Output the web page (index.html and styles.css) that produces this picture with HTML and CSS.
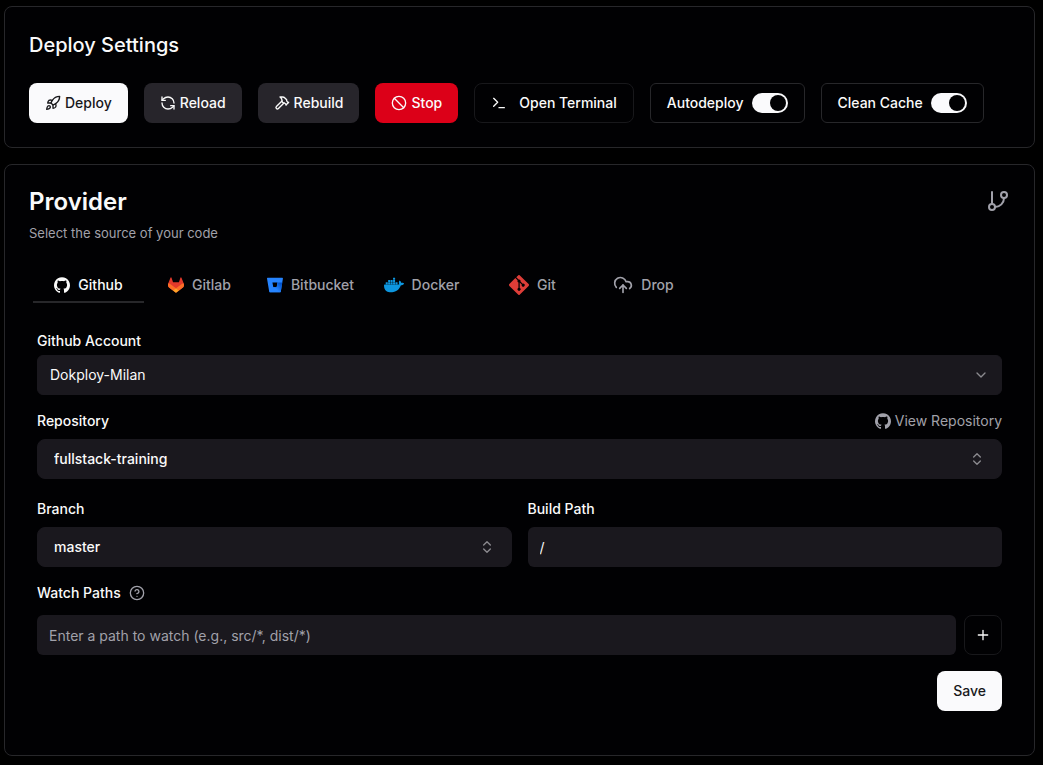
FILE: index.html
```html
<!DOCTYPE html>
<html lang="en">
<head>
<meta charset="utf-8">
<meta name="viewport" content="width=device-width, initial-scale=1">
<title>Deploy Settings</title>
<link rel="stylesheet" href="styles.css">
</head>
<body>
<svg class="sprite" aria-hidden="true">
  <symbol id="github" viewBox="0 0 438.549 438.549"><path fill="currentColor" d="M409.132 114.573c-19.608-33.596-46.205-60.194-79.798-79.8-33.598-19.607-70.277-29.408-110.063-29.408-39.781 0-76.472 9.804-110.063 29.408-33.596 19.605-60.192 46.204-79.8 79.8C9.803 148.168 0 184.854 0 224.63c0 47.78 13.94 90.745 41.827 128.906 27.884 38.164 63.906 64.572 108.063 79.227 5.14.954 8.945.283 11.419-1.996 2.475-2.282 3.711-5.14 3.711-8.562 0-.571-.049-5.708-.144-15.417a2549.81 2549.81 0 01-.144-25.406l-6.567 1.136c-4.187.767-9.469 1.092-15.846 1-6.374-.089-12.991-.757-19.842-1.999-6.854-1.231-13.229-4.086-19.13-8.559-5.898-4.473-10.085-10.328-12.56-17.556l-2.855-6.57c-1.903-4.374-4.899-9.233-8.992-14.559-4.093-5.331-8.232-8.945-12.419-10.848l-1.999-1.431c-1.332-.951-2.568-2.098-3.711-3.429-1.142-1.331-1.997-2.663-2.568-3.997-.572-1.335-.098-2.43 1.427-3.289 1.525-.859 4.281-1.276 8.28-1.276l5.708.853c3.807.763 8.516 3.042 14.133 6.851 5.614 3.806 10.229 8.754 13.846 14.842 4.38 7.806 9.657 13.754 15.846 17.847 6.184 4.093 12.419 6.136 18.699 6.136 6.28 0 11.704-.476 16.274-1.423 4.565-.952 8.848-2.383 12.847-4.285 1.713-12.758 6.377-22.559 13.988-29.41-10.848-1.14-20.601-2.857-29.264-5.14-8.658-2.286-17.605-5.996-26.835-11.14-9.235-5.137-16.896-11.516-22.985-19.126-6.09-7.614-11.088-17.61-14.987-29.979-3.901-12.374-5.852-26.648-5.852-42.826 0-23.035 7.52-42.637 22.557-58.817-7.044-17.318-6.379-36.732 1.997-58.24 5.52-1.715 13.706-.428 24.554 3.853 10.85 4.283 18.794 7.952 23.84 10.994 5.046 3.041 9.089 5.618 12.135 7.708 17.705-4.947 35.976-7.421 54.818-7.421s37.117 2.474 54.823 7.421l10.849-6.849c7.419-4.57 16.18-8.758 26.262-12.565 10.088-3.805 17.802-4.853 23.134-3.138 8.562 21.509 9.325 40.922 2.279 58.24 15.036 16.18 22.559 35.787 22.559 58.817 0 16.178-1.958 30.497-5.853 42.966-3.9 12.471-8.941 22.457-15.125 29.979-6.191 7.521-13.901 13.85-23.131 18.986-9.232 5.14-18.182 8.85-26.84 11.136-8.662 2.286-18.415 4.004-29.263 5.146 9.894 8.562 14.842 22.077 14.842 40.539v60.237c0 3.422 1.19 6.279 3.572 8.562 2.379 2.279 6.136 2.95 11.276 1.995 44.163-14.653 80.185-41.062 108.068-79.226 27.88-38.161 41.825-81.126 41.825-128.906-.01-39.771-9.818-76.454-29.414-110.049z"/></symbol>
  <symbol id="chevrons" viewBox="0 0 24 24"><path d="m7 15 5 5 5-5M7 9l5-5 5 5"/></symbol>
</svg>

<main class="page">
  <section class="card">
    <h2 class="card-title">Deploy Settings</h2>
    <div class="actions">
      <button type="button" class="btn btn-primary">
        <svg class="icon" viewBox="0 0 24 24"><path d="M4.5 16.5c-1.5 1.26-2 5-2 5s3.74-.5 5-2c.71-.84.7-2.13-.09-2.91a2.18 2.18 0 0 0-2.91-.09z"/><path d="m12 15-3-3a22 22 0 0 1 2-3.95A12.88 12.88 0 0 1 22 2c0 2.72-.78 7.5-6 11a22.35 22.35 0 0 1-4 2z"/><path d="M9 12H4s.55-3.03 2-4c1.62-1.08 5 0 5 0"/><path d="M12 15v5s3.03-.55 4-2c1.08-1.62 0-5 0-5"/></svg>
        Deploy
      </button>
      <button type="button" class="btn btn-secondary">
        <svg class="icon" viewBox="0 0 24 24"><path d="M21 12a9 9 0 0 0-9-9 9.75 9.75 0 0 0-6.74 2.74L3 8"/><path d="M3 3v5h5"/><path d="M3 12a9 9 0 0 0 9 9 9.75 9.75 0 0 0 6.74-2.74L21 16"/><path d="M16 16h5v5"/></svg>
        Reload
      </button>
      <button type="button" class="btn btn-secondary">
        <svg class="icon" viewBox="0 0 24 24"><path d="m15 12-8.373 8.373a1 1 0 1 1-3-3L12 9"/><path d="m18 15 4-4"/><path d="m21.5 11.5-1.914-1.914A2 2 0 0 1 19 8.172V7l-2.26-2.26a6 6 0 0 0-4.202-1.756L9 2.96l.92.82A6.18 6.18 0 0 1 12 8.4V10l2 2h1.172a2 2 0 0 1 1.414.586L18.5 14.5"/></svg>
        Rebuild
      </button>
      <button type="button" class="btn btn-danger">
        <svg class="icon" viewBox="0 0 24 24"><circle cx="12" cy="12" r="10"/><path d="m4.9 4.9 14.2 14.2"/></svg>
        Stop
      </button>
      <button type="button" class="btn btn-outline btn-terminal">
        <svg class="icon" viewBox="0 0 24 24"><path d="m4 17 6-6-6-6"/><path d="M12 19h8"/></svg>
        Open Terminal
      </button>
      <label class="toggle">Autodeploy <input type="checkbox" role="switch" class="switch" checked></label>
      <label class="toggle">Clean Cache <input type="checkbox" role="switch" class="switch" checked></label>
    </div>
  </section>

  <section class="card">
    <header class="provider-head">
      <div>
        <h2 class="provider-title">Provider</h2>
        <p class="provider-text">Select the source of your code</p>
      </div>
      <svg class="icon icon-large" viewBox="0 0 24 24"><path d="M6 3v12"/><circle cx="18" cy="6" r="3"/><circle cx="6" cy="18" r="3"/><path d="M18 9a9 9 0 0 1-9 9"/></svg>
    </header>

    <div class="tabs" role="tablist">
      <button type="button" role="tab" aria-selected="true" class="tab tab-active"><svg class="logo"><use href="#github"/></svg>Github</button>
      <button type="button" role="tab" aria-selected="false" class="tab">
        <svg class="logo" viewBox="0 0 25 24"><path fill="#e2392b" d="m24.507 9.5-.034-.09L21.082.562a.896.896 0 0 0-1.694.091l-2.29 7.01H7.825L5.535.653a.898.898 0 0 0-1.694-.09L.451 9.411.416 9.5a6.297 6.297 0 0 0 2.09 7.278l.012.01.03.022 5.16 3.867 2.56 1.935 1.554 1.176a1.051 1.051 0 0 0 1.268 0l1.555-1.176 2.56-1.935 5.197-3.89.014-.01A6.297 6.297 0 0 0 24.507 9.5Z"/><path fill="#fc6d26" d="m24.507 9.5-.034-.09a11.44 11.44 0 0 0-4.56 2.051l-7.447 5.632 4.742 3.584 5.197-3.89.014-.01A6.297 6.297 0 0 0 24.507 9.5ZM5.01 11.461a11.43 11.43 0 0 0-4.56-2.05L.416 9.5a6.297 6.297 0 0 0 2.09 7.278l.012.01.03.022 5.16 3.867 4.745-3.584-7.444-5.632Z"/><path fill="#fca326" d="m7.707 20.677 2.56 1.935 1.555 1.176a1.051 1.051 0 0 0 1.268 0l1.555-1.176 2.56-1.935-4.743-3.584-4.755 3.584Z"/></svg>
        Gitlab
      </button>
      <button type="button" role="tab" aria-selected="false" class="tab">
        <svg class="logo" viewBox="0 0 257 231"><defs><linearGradient id="bucket-shade" x1="1.08" y1=".12" x2=".45" y2=".6"><stop offset=".18" stop-color="#0052cc"/><stop offset="1" stop-color="#2684ff"/></linearGradient></defs><path fill="#2684ff" d="M8.308 0A8.202 8.202 0 0 0 .106 9.516l34.819 211.373a11.155 11.155 0 0 0 10.909 9.31h167.04a8.202 8.202 0 0 0 8.201-6.89l34.82-213.752a8.202 8.202 0 0 0-8.203-9.514zm146.616 152.768h-53.315l-14.436-75.42h80.67z"/><path fill="url(#bucket-shade)" d="M244.61 76.766h-76.685l-12.902 75.936h-53.26L38.88 227.426s2.984 2.775 6.954 2.775h167.04a8.202 8.202 0 0 0 8.201-6.89z"/></svg>
        Bitbucket
      </button>
      <button type="button" role="tab" aria-selected="false" class="tab">
        <svg class="logo logo-wide" viewBox="0 0 24 24"><path fill="#0d96df" d="M13.983 11.078h2.119a.186.186 0 00.186-.185V9.006a.186.186 0 00-.186-.186h-2.119a.185.185 0 00-.185.185v1.888c0 .102.083.185.185.185m-2.954-5.43h2.118a.186.186 0 00.186-.186V3.574a.186.186 0 00-.186-.185h-2.118a.185.185 0 00-.185.185v1.888c0 .102.082.185.185.185m0 2.716h2.118a.187.187 0 00.186-.186V6.29a.186.186 0 00-.186-.185h-2.118a.185.185 0 00-.185.185v1.887c0 .102.082.185.185.186m-2.93 0h2.12a.186.186 0 00.184-.186V6.29a.185.185 0 00-.185-.185H8.1a.185.185 0 00-.185.185v1.887c0 .102.083.185.185.186m-2.964 0h2.119a.186.186 0 00.185-.186V6.29a.185.185 0 00-.185-.185H5.136a.186.186 0 00-.186.185v1.887c0 .102.084.185.186.186m5.893 2.715h2.118a.186.186 0 00.186-.185V9.006a.186.186 0 00-.186-.186h-2.118a.185.185 0 00-.185.185v1.888c0 .102.082.185.185.185m-2.93 0h2.12a.185.185 0 00.184-.185V9.006a.185.185 0 00-.184-.186h-2.12a.185.185 0 00-.184.185v1.888c0 .102.083.185.185.185m-2.964 0h2.119a.185.185 0 00.185-.185V9.006a.185.185 0 00-.184-.186h-2.12a.186.186 0 00-.186.186v1.887c0 .102.084.185.186.185m-2.92 0h2.12a.185.185 0 00.184-.185V9.006a.185.185 0 00-.184-.186h-2.12a.185.185 0 00-.184.185v1.888c0 .102.082.185.185.185M23.763 9.89c-.065-.051-.672-.51-1.954-.51-.338.001-.676.03-1.01.087-.248-1.7-1.653-2.53-1.716-2.566l-.344-.199-.226.327c-.284.438-.49.922-.612 1.43-.23.97-.09 1.882.403 2.661-.595.332-1.55.413-1.744.42H.751a.751.751 0 00-.75.748 11.376 11.376 0 00.692 4.062c.545 1.428 1.355 2.48 2.41 3.124 1.18.723 3.1 1.137 5.275 1.137.983.003 1.963-.086 2.93-.266a12.248 12.248 0 003.823-1.389c.98-.567 1.86-1.288 2.61-2.136 1.252-1.418 1.998-2.997 2.553-4.4h.221c1.372 0 2.215-.549 2.68-1.009.309-.293.55-.65.707-1.046l.098-.288Z"/></svg>
        Docker
      </button>
      <button type="button" role="tab" aria-selected="false" class="tab">
        <svg class="logo logo-wide" viewBox="0 0 92 92"><path fill="#dd3d38" d="M90.156 41.965 50.036 1.848a5.918 5.918 0 0 0-8.372 0l-8.328 8.332 10.566 10.566a7.03 7.03 0 0 1 7.23 1.684 7.034 7.034 0 0 1 1.669 7.277l10.187 10.184a7.028 7.028 0 0 1 7.278 1.672 7.04 7.04 0 0 1 0 9.957 7.05 7.05 0 0 1-9.965 0 7.044 7.044 0 0 1-1.528-7.66l-9.5-9.497V59.36a7.04 7.04 0 0 1 1.86 11.29 7.04 7.04 0 0 1-9.957 0 7.04 7.04 0 0 1 0-9.958 7.06 7.06 0 0 1 2.304-1.539V33.926a7.049 7.049 0 0 1-3.82-9.234L29.242 14.272 1.73 41.777a5.925 5.925 0 0 0 0 8.371L41.852 90.27a5.925 5.925 0 0 0 8.37 0l39.934-39.934a5.925 5.925 0 0 0 0-8.371"/></svg>
        Git
      </button>
      <button type="button" role="tab" aria-selected="false" class="tab">
        <svg class="icon logo-wide" viewBox="0 0 24 24"><path d="M4 14.899A7 7 0 1 1 15.71 8h1.79a4.5 4.5 0 0 1 2.5 8.242"/><path d="M12 12v9"/><path d="m16 16-4-4-4 4"/></svg>
        Drop
      </button>
    </div>

    <form class="form">
      <div class="field field-tight">
        <label for="account">Github Account</label>
        <div class="select-wrap">
          <select id="account" class="control"><option>Dokploy-Milan</option></select>
          <svg class="icon chevron" viewBox="0 0 24 24"><path d="m6 9 6 6 6-6"/></svg>
        </div>
      </div>
      <div class="field">
        <div class="label-row">
          <label for="repo">Repository</label>
          <a href="#" class="repo-link"><svg class="logo"><use href="#github"/></svg>View Repository</a>
        </div>
        <div class="select-wrap">
          <select id="repo" class="control combo"><option>fullstack-training</option></select>
          <svg class="icon chevrons"><use href="#chevrons"/></svg>
        </div>
      </div>
      <div class="columns">
        <div class="field">
          <label for="branch">Branch</label>
          <div class="select-wrap">
            <select id="branch" class="control combo"><option>master</option></select>
            <svg class="icon chevrons"><use href="#chevrons"/></svg>
          </div>
        </div>
        <div class="field">
          <label for="build">Build Path</label>
          <input id="build" type="text" class="control" value="/">
        </div>
      </div>
      <div class="field field-loose">
        <div class="label-row label-help">
          <label for="watch">Watch Paths</label>
          <svg class="icon" viewBox="0 0 24 24"><circle cx="12" cy="12" r="10"/><path d="M9.09 9a3 3 0 0 1 5.83 1c0 2-3 3-3 3"/><path d="M12 17h.01"/></svg>
        </div>
        <div class="watch-row">
          <input id="watch" type="text" class="control" placeholder="Enter a path to watch (e.g., src/*, dist/*)">
          <button type="button" class="btn btn-outline btn-add" aria-label="Add path"><svg class="icon" viewBox="0 0 24 24"><path d="M5 12h14M12 5v14"/></svg></button>
        </div>
      </div>
      <button type="submit" class="btn btn-primary btn-save">Save</button>
    </form>
  </section>
</main>
</body>
</html>
```
FILE: styles.css
```css
* {
  box-sizing: border-box;
}

body {
  margin: 0;
  background: #000;
  color: #fafafa;
  font-family: Inter, "Liberation Sans", sans-serif;
  font-size: 14px;
  line-height: 20px;
}

h2,
p {
  margin: 0;
}

button,
input,
select {
  font: inherit;
  color: inherit;
}

.sprite {
  display: none;
}

.page {
  display: flex;
  flex-direction: column;
  gap: 16px;
  padding: 6px 8px 8px 4px;
}

.card {
  padding: 24px;
  border: 1px solid #27272a;
  border-radius: 8px;
  background: #010103;
}

.card-title {
  margin-bottom: 24px;
  font-size: 20px;
  font-weight: 500;
  line-height: 28px;
}

.icon {
  flex: none;
  width: 16px;
  height: 16px;
  fill: none;
  stroke: currentColor;
  stroke-width: 2;
  stroke-linecap: round;
  stroke-linejoin: round;
}

.icon-large {
  width: 24px;
  height: 24px;
  color: #a1a1aa;
}

.actions {
  display: flex;
  flex-wrap: wrap;
  gap: 16px;
}

.btn {
  display: inline-flex;
  align-items: center;
  justify-content: center;
  gap: 4px;
  height: 40px;
  padding: 0 16px;
  border: 0;
  border-radius: 8px;
  font-weight: 500;
  white-space: nowrap;
}

.btn-primary {
  background: #fafafc;
  color: #18181b;
}

.btn-secondary {
  background: #27252b;
}

.btn-danger {
  background: #dc0018;
}

.btn-outline {
  border: 1px solid #18181b;
  background: transparent;
}

.btn-terminal {
  gap: 12px;
}

.toggle {
  display: inline-flex;
  align-items: center;
  gap: 8px;
  height: 40px;
  padding: 0 16px;
  border: 1px solid #27272a;
  border-radius: 6px;
  font-weight: 500;
  white-space: nowrap;
}

.switch {
  display: flex;
  align-items: center;
  justify-content: flex-end;
  appearance: none;
  width: 36px;
  height: 20px;
  margin: 0;
  padding: 2px;
  border-radius: 10px;
  background: #fafafc;
}

.switch::before {
  content: "";
  width: 16px;
  height: 16px;
  border-radius: 50%;
  background: #010103;
}

.switch:not(:checked) {
  justify-content: flex-start;
  background: #27272a;
}

.provider-head {
  display: flex;
  justify-content: space-between;
  align-items: flex-start;
}

.provider-title {
  font-size: 24px;
  font-weight: 600;
  line-height: 26px;
}

.provider-text {
  margin-top: 8px;
  color: #a1a1aa;
  font-size: 13px;
}

.tabs {
  display: grid;
  grid-template-columns: repeat(6, minmax(0, 111px));
  margin: 26px 4px 0;
}

.tab {
  display: flex;
  align-items: center;
  justify-content: center;
  gap: 8px;
  height: 34px;
  padding: 0;
  border: 0;
  border-bottom: 2px solid transparent;
  background: transparent;
  color: #a1a1aa;
  font-weight: 500;
}

.tab-active {
  border-bottom-color: #27272a;
  color: #fafafa;
}

.logo {
  flex: none;
  width: 16px;
  height: 16px;
}

.logo-wide {
  width: 20px;
  height: 20px;
}

.form {
  display: flex;
  flex-direction: column;
  gap: 16px;
  padding: 28px 8px 20px;
}

.field {
  display: flex;
  flex-direction: column;
  gap: 8px;
}

.field-tight {
  gap: 4px;
}

.field-loose {
  gap: 12px;
}

.field label {
  font-weight: 500;
}

.label-row {
  display: flex;
  align-items: center;
  justify-content: space-between;
}

.label-help {
  justify-content: flex-start;
  gap: 8px;
}

.label-help .icon {
  color: #a1a1aa;
}

.repo-link {
  display: inline-flex;
  align-items: center;
  gap: 4px;
  color: #a1a1aa;
  text-decoration: none;
}

.select-wrap {
  position: relative;
}

.control {
  display: block;
  width: 100%;
  height: 40px;
  padding: 0 12px;
  border: 0;
  border-radius: 6px;
  background: #1a181e;
}

.control::placeholder {
  color: #a1a1aa;
  opacity: 1;
}

select.control {
  appearance: none;
  border: 1px solid #1a181e;
}

.combo {
  padding: 0 16px;
  border-radius: 8px;
  font-weight: 500;
}

.chevron,
.chevrons {
  position: absolute;
  top: 12px;
  right: 13px;
  color: #8b8a8f;
  pointer-events: none;
}

.chevrons {
  right: 17px;
}

.columns {
  display: grid;
  grid-template-columns: 1fr 1fr;
  gap: 16px;
  margin-top: 4px;
}

.watch-row {
  display: flex;
  gap: 8px;
}

.watch-row .control {
  flex: 1;
  min-width: 0;
}

.btn-add {
  width: 38px;
  padding: 0;
}

.btn-save {
  align-self: flex-end;
}
```
